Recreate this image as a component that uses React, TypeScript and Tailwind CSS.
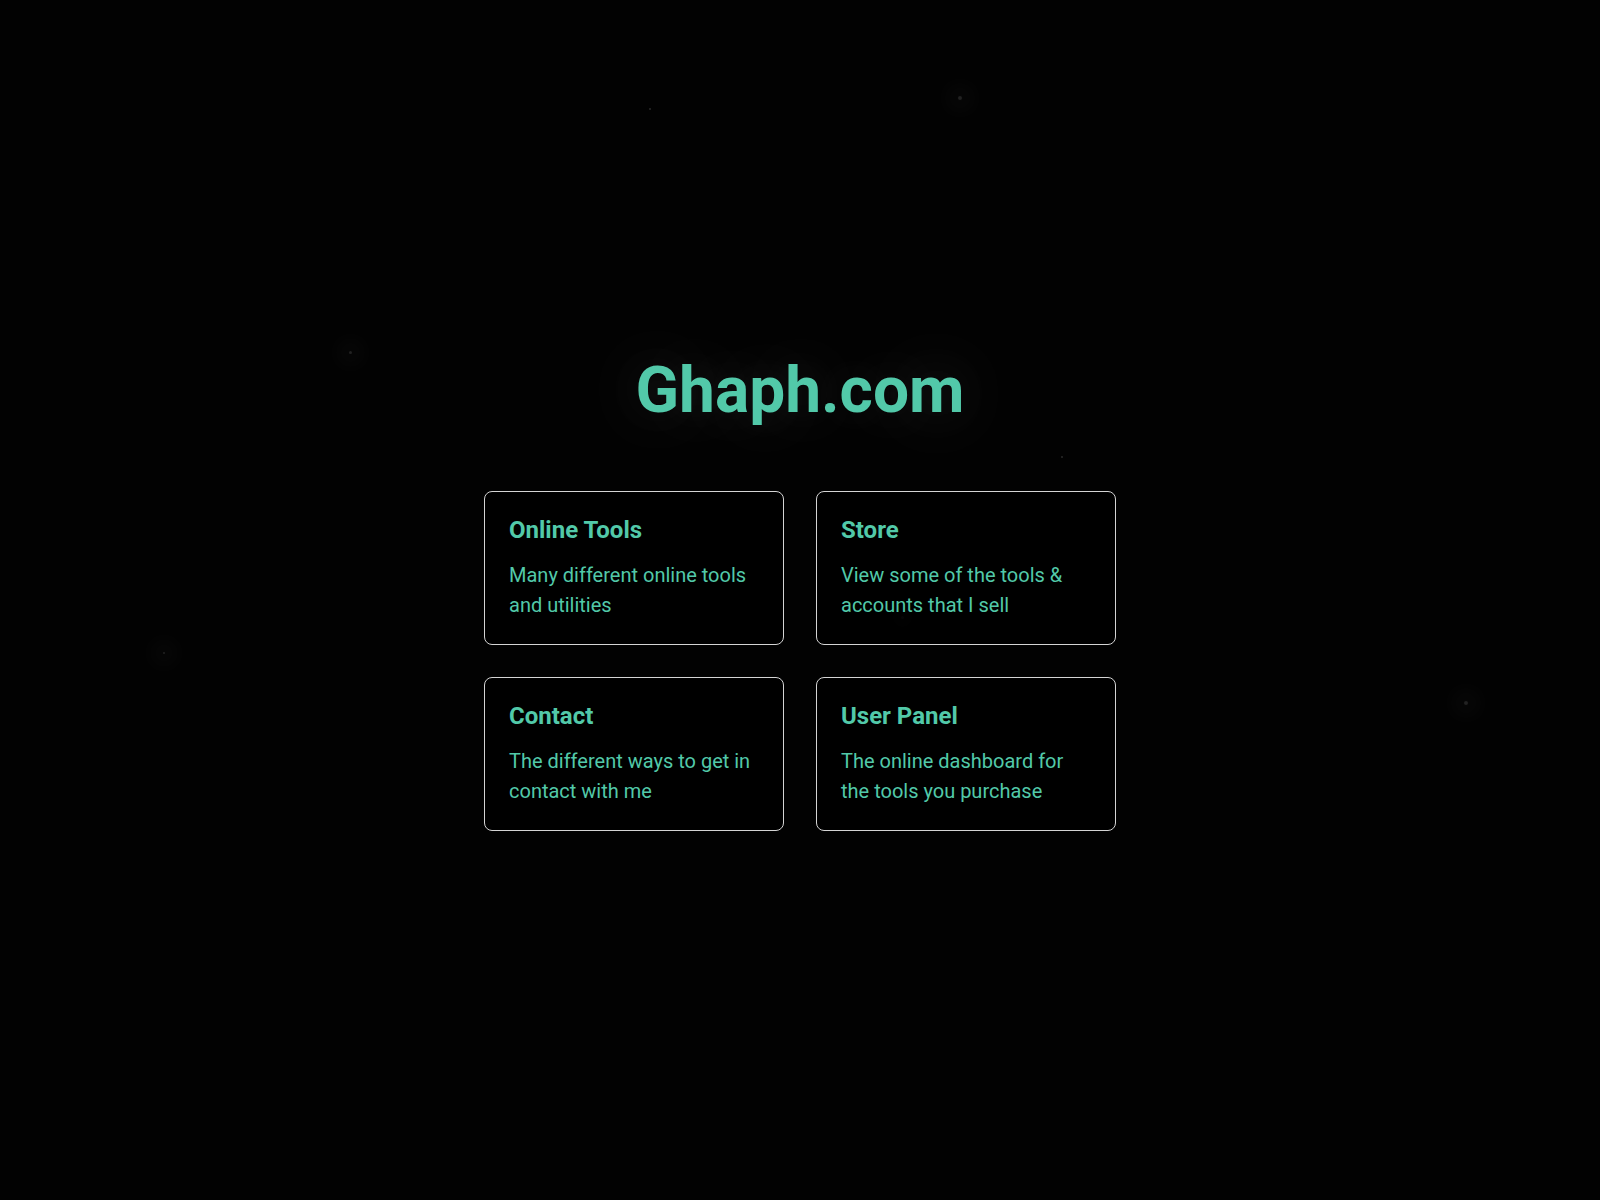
const stars = [
  { x: 650, y: 109, size: 2, glow: 0 },
  { x: 960, y: 98, size: 4, glow: 1 },
  { x: 350, y: 352, size: 3, glow: 1 },
  { x: 164, y: 653, size: 2, glow: 1 },
  { x: 1062, y: 457, size: 2, glow: 0 },
  { x: 902, y: 617, size: 3, glow: 1 },
  { x: 1466, y: 703, size: 4, glow: 1 },
];

const links = [
  { title: "Online Tools", text: "Many different online tools and utilities" },
  { title: "Store", text: "View some of the tools & accounts that I sell" },
  { title: "Contact", text: "The different ways to get in contact with me" },
  { title: "User Panel", text: "The online dashboard for the tools you purchase" },
];

export default function App() {
  return (
    <div className="relative min-h-screen overflow-hidden bg-[#020202] font-['Roboto',sans-serif]">
      {/* background stars */}
      {stars.map((s, i) => (
        <span
          key={i}
          className={
            s.glow
              ? "absolute rounded-full bg-[#222] shadow-[0_0_22px_12px_rgba(255,255,255,0.03)]"
              : "absolute rounded-full bg-[#2a2a2a]"
          }
          style={{ left: s.x - s.size / 2, top: s.y - s.size / 2, width: s.size, height: s.size }}
        />
      ))}

      <main className="relative flex flex-col items-center pt-[353px]">
        <h1 className="mb-[63px] text-[64px] leading-[75px] font-bold text-[#52c9a9] [text-shadow:0_0_90px_rgba(255,255,255,0.22),0_0_50px_rgba(255,255,255,0.1)]">
          Ghaph.com
        </h1>

        <div className="grid grid-cols-[300px_300px] gap-8">
          {links.map((l) => (
            <a
              key={l.title}
              href="#"
              className="block h-[154px] rounded-lg border border-[#d4d4d4] bg-black/80 p-6 text-[#52c9a9]"
            >
              <h2 className="mb-4 text-[24px] leading-[28px] font-bold">{l.title}</h2>
              <p className="text-[20px] leading-[30px]">{l.text}</p>
            </a>
          ))}
        </div>
      </main>
    </div>
  );
}
